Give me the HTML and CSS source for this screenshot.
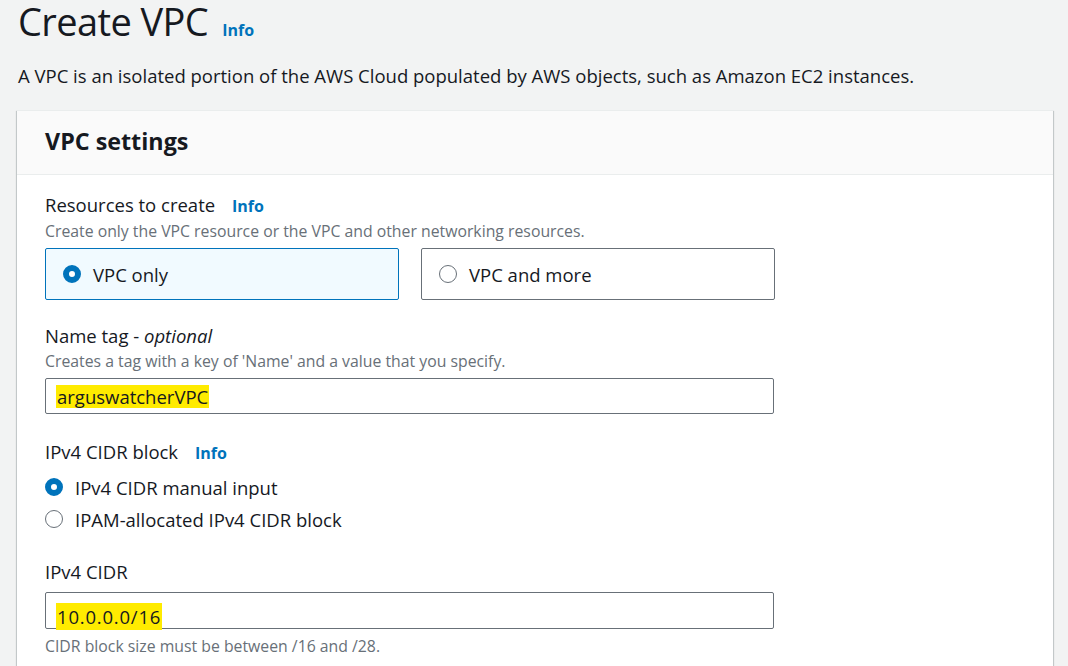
FILE: index.html
```html
<!DOCTYPE html>
<html>
<head>
<meta charset="utf-8">
<link rel="stylesheet" href="styles.css">
</head>
<body>
<div class="page">
  <h1 class="title">Create VPC<a class="info info-title">Info</a></h1>
  <p class="lead">A VPC is an isolated portion of the AWS Cloud populated by AWS objects, such as Amazon EC2 instances.</p>
  <div class="card">
    <div class="card-head"><h2>VPC settings</h2></div>
    <div class="card-body">
      <div class="field">
        <div class="label">Resources to create <a class="info">Info</a></div>
        <div class="desc">Create only the VPC resource or the VPC and other networking resources.</div>
        <div class="tiles">
          <div class="tile selected"><span class="radio checked"></span><span>VPC only</span></div>
          <div class="tile"><span class="radio"></span><span>VPC and more</span></div>
        </div>
      </div>
      <div class="field f2">
        <div class="label">Name tag - <i>optional</i></div>
        <div class="desc">Creates a tag with a key of 'Name' and a value that you specify.</div>
        <div class="input"><span class="hl">arguswatcherVPC</span></div>
      </div>
      <div class="field f3">
        <div class="label">IPv4 CIDR block <a class="info">Info</a></div>
        <div class="radios">
          <div class="opt"><span class="radio checked"></span><span>IPv4 CIDR manual input</span></div>
          <div class="opt"><span class="radio"></span><span>IPAM-allocated IPv4 CIDR block</span></div>
        </div>
      </div>
      <div class="field f4">
        <div class="label">IPv4 CIDR</div>
        <div class="input input2"><span class="hl hl2">10.0.0.0/16</span></div>
        <div class="desc desc-after">CIDR block size must be between /16 and /28.</div>
      </div>
    </div>
  </div>
</div>
</body>
</html>
```
FILE: styles.css
```css
html, body { margin: 0; padding: 0; }
body {
  background: #f2f3f3;
  font-family: "Open Sans", "Noto Sans", sans-serif;
  color: #16191f;
  width: 1068px;
  height: 666px;
  overflow: hidden;
}
.page { padding-left: 18px; }
.title {
  margin: 0;
  font-size: 38px;
  font-weight: 400;
  line-height: 42px;
  letter-spacing: -0.6px;
}
.info {
  color: #0073bb;
  font-weight: 700;
  font-size: 16px;
  letter-spacing: 0;
  margin-left: 12px;
}
.info-title { margin-left: 14px; font-size: 16px; line-height: 16px; }
.lead {
  margin: 22px 0 0;
  font-size: 18.5px;
  line-height: 24px;
}
.card {
  margin: 22px 15px 0 -1px;
  background: #fff;
  border-top: 1px solid #eaeded;
  box-shadow: 0 1px 1px 0 rgba(0,28,36,.3), 1px 1px 1px 0 rgba(0,28,36,.15), -1px 1px 1px 0 rgba(0,28,36,.15);
  height: 600px;
}
.card-head {
  background: #fafafa;
  border-bottom: 1px solid #eaeded;
  height: 59px;
  padding-bottom: 4px;
  display: flex;
  align-items: center;
  padding-left: 28px;
}
.card-head h2 {
  margin: 0;
  font-size: 23.3px;
  font-weight: 700;
  line-height: 30px;
}
.card-body { padding: 18px 28px 0; }
.label { font-size: 18.5px; line-height: 24px; }
.label .info { font-size: 16px; margin-left: 12px; }
.desc { font-size: 15.8px; line-height: 20px; color: #687078; margin-top: 3px; }
.tiles { display: flex; gap: 22px; margin-top: 7px; }
.tile {
  box-sizing: border-box;
  width: 354px;
  height: 52px;
  border: 1px solid #687078;
  border-radius: 2px;
  display: flex;
  align-items: center;
  padding-left: 17px;
  font-size: 18.5px;
}
.tile.selected { border-color: #0073bb; background: #f1faff; }
.radio {
  box-sizing: border-box;
  width: 18px; height: 18px;
  border: 1.5px solid #687078;
  border-radius: 50%;
  margin-right: 12px;
  flex: none;
}
.radio.checked {
  border: 6px solid #0073bb;
  background: #fff;
}
.f2 { margin-top: 24px; }
.input {
  box-sizing: border-box;
  margin-top: 7px;
  width: 729px;
  height: 36px;
  border: 1px solid #687078;
  border-radius: 2px;
  display: flex;
  align-items: center;
  padding-left: 10px;
  font-size: 18.5px;
}
.hl { background: #ffeb00; line-height: 23px; padding: 0 1px; }
.f3 { margin-top: 26px; }
.radios { margin-top: 6px; }
.opt { display: flex; align-items: center; height: 32px; font-size: 18.5px; }
.f4 { margin-top: 25px; }
.input2 { margin-top: 8px; height: 37px; align-items: flex-end; }
.hl2 { line-height: 27px; margin-bottom: -2px; letter-spacing: 0.8px; padding-left: 1px; }
.desc-after { margin-top: 7px; }
```
